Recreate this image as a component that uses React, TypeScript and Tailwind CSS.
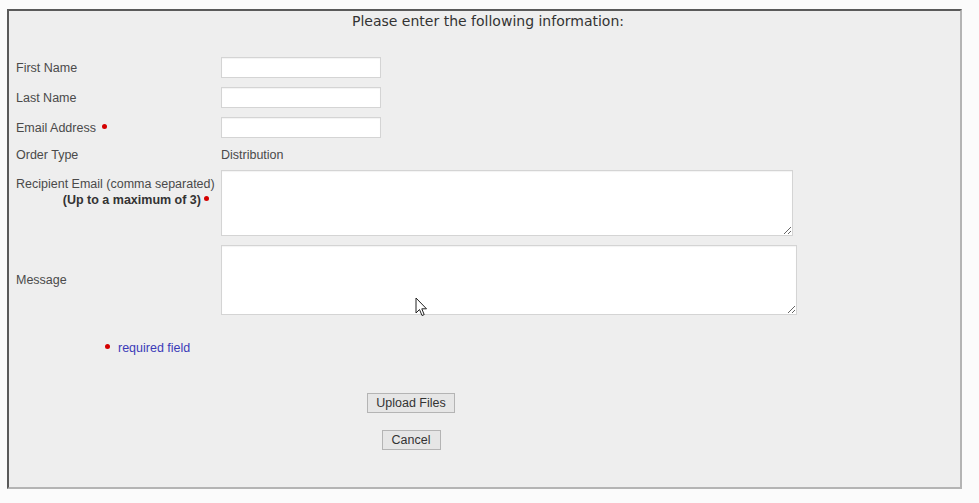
import React from "react";

function Req({ className = "" }: { className?: string }) {
  return <span className={`inline-block h-[5px] w-[5px] rounded-full bg-[#d40000] ${className}`} />;
}

function TextRow({ label, req }: { label: string; req?: boolean }) {
  return (
    <div className="mt-[9px] flex h-[21px] items-center first:mt-[28px]">
      <div className="flex w-[205px] translate-y-[1px] items-center">
        {label}
        {req && <Req className="ml-[6px] -translate-y-[2px]" />}
      </div>
      <input
        type="text"
        className="h-[21px] w-[160px] border border-[#d4d4d4] bg-white shadow-[inset_0_1px_1px_rgba(0,0,0,0.05)] outline-none"
      />
    </div>
  );
}

export default function App() {
  return (
    <div className="relative h-[503px] w-[979px] overflow-hidden bg-[#fbfbfb] pt-[9px] pl-[7px] font-['Liberation_Sans',Arial,sans-serif] text-[12.5px] text-[#4a4a4a]">
      <div className="h-[480px] w-[955px] border-2 border-t-[#5a5a5a] border-l-[#5a5a5a] border-r-[#b4b4b4] border-b-[#b4b4b4] bg-[#eeeeee] pl-[7px]">
        <div className="h-[18px] text-center font-['DejaVu_Sans',sans-serif] text-[14px] leading-[20px] text-[#333]">
          Please enter the following information:
        </div>

        <div className="flex flex-col">
          <TextRow label="First Name" />
          <TextRow label="Last Name" />
          <TextRow label="Email Address" req />

          <div className="mt-[9px] flex h-[16px] items-center">
            <div className="w-[205px]">Order Type</div>
            <div>Distribution</div>
          </div>

          <div className="mt-[7px] flex">
            <div className="w-[205px] pt-[6px] leading-[16px]">
              <div>Recipient Email (comma separated)</div>
              <div className="flex items-center justify-end pr-[12px] font-bold text-[#333]">
                (Up to a maximum of 3)
                <Req className="ml-[3px] -translate-y-[2px]" />
              </div>
            </div>
            <textarea className="h-[66px] w-[572px] border border-[#d4d4d4] bg-white shadow-[inset_0_1px_1px_rgba(0,0,0,0.05)] outline-none" />
          </div>

          <div className="mt-[9px] flex items-center">
            <div className="w-[205px]">Message</div>
            <textarea className="h-[70px] w-[576px] border border-[#d4d4d4] bg-white shadow-[inset_0_1px_1px_rgba(0,0,0,0.05)] outline-none" />
          </div>

          <div className="mt-[25px] flex h-[16px] items-center pl-[89px]">
            <Req className="-translate-y-[2px]" />
            <span className="ml-[8px] text-[#3b3bb8]">required field</span>
          </div>

          <div className="flex w-[790px] flex-col items-center">
            <button className="mt-[37px] h-[20px] w-[88px] border border-[#b4b4b4] bg-[#e6e6e6] text-[12.5px] text-[#333]">
              Upload Files
            </button>
            <button className="mt-[17px] h-[20px] w-[59px] border border-[#b4b4b4] bg-[#e6e6e6] text-[12.5px] text-[#333]">
              Cancel
            </button>
          </div>
        </div>
      </div>

      {/* mouse pointer captured in the screenshot */}
      <svg className="absolute left-[415px] top-[297px]" width="13" height="20" viewBox="0 0 13 20">
        <path d="M1 1 L1 16 L4.5 12.5 L7 18.5 L9.2 17.6 L6.8 11.8 L11.5 11.8 Z" fill="#fff" stroke="#222" strokeWidth="1" strokeLinejoin="round" />
      </svg>
    </div>
  );
}
